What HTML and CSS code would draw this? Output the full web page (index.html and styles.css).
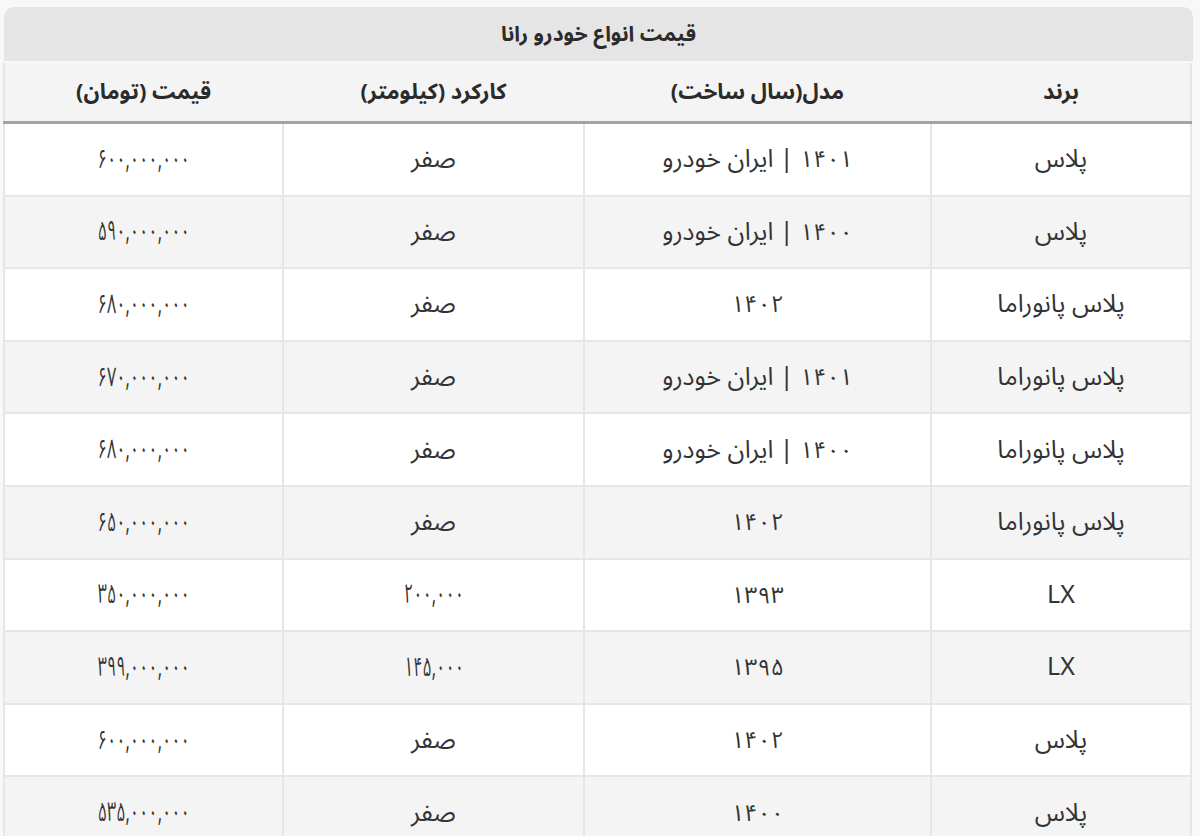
FILE: index.html
```html
<!DOCTYPE html>
<html lang="fa" dir="rtl">
<head>
<meta charset="utf-8">
<title>قیمت انواع خودرو رانا</title>
<link rel="stylesheet" href="styles.css">
</head>
<body>
<div class="wrap">
  <div class="caption">قیمت انواع خودرو رانا</div>
  <table class="price-table">
    <colgroup>
      <col class="c-brand">
      <col class="c-model">
      <col class="c-km">
      <col class="c-price">
    </colgroup>
    <thead>
      <tr><th>برند</th><th>مدل(سال ساخت)</th><th>کارکرد (کیلومتر)</th><th>قیمت (تومان)</th></tr>
    </thead>
    <tbody>
      <tr><td>پلاس</td><td><span class="year">۱۴۰۱</span> | ایران خودرو</td><td>صفر</td><td><span class="num">۶۰۰,۰۰۰,۰۰۰</span></td></tr>
      <tr><td>پلاس</td><td><span class="year">۱۴۰۰</span> | ایران خودرو</td><td>صفر</td><td><span class="num">۵۹۰,۰۰۰,۰۰۰</span></td></tr>
      <tr><td>پلاس پانوراما</td><td><span class="year">۱۴۰۲</span></td><td>صفر</td><td><span class="num">۶۸۰,۰۰۰,۰۰۰</span></td></tr>
      <tr><td>پلاس پانوراما</td><td><span class="year">۱۴۰۱</span> | ایران خودرو</td><td>صفر</td><td><span class="num">۶۷۰,۰۰۰,۰۰۰</span></td></tr>
      <tr><td>پلاس پانوراما</td><td><span class="year">۱۴۰۰</span> | ایران خودرو</td><td>صفر</td><td><span class="num">۶۸۰,۰۰۰,۰۰۰</span></td></tr>
      <tr><td>پلاس پانوراما</td><td><span class="year">۱۴۰۲</span></td><td>صفر</td><td><span class="num">۶۵۰,۰۰۰,۰۰۰</span></td></tr>
      <tr><td>LX</td><td><span class="year">۱۳۹۳</span></td><td><span class="num">۲۰۰,۰۰۰</span></td><td><span class="num">۳۵۰,۰۰۰,۰۰۰</span></td></tr>
      <tr><td>LX</td><td><span class="year">۱۳۹۵</span></td><td><span class="num">۱۴۵,۰۰۰</span></td><td><span class="num">۳۹۹,۰۰۰,۰۰۰</span></td></tr>
      <tr><td>پلاس</td><td><span class="year">۱۴۰۲</span></td><td>صفر</td><td><span class="num">۶۰۰,۰۰۰,۰۰۰</span></td></tr>
      <tr><td>پلاس</td><td><span class="year">۱۴۰۰</span></td><td>صفر</td><td><span class="num">۵۳۵,۰۰۰,۰۰۰</span></td></tr>
    </tbody>
  </table>
</div>
</body>
</html>
```
FILE: styles.css
```css
html, body {
  margin: 0;
  padding: 0;
  background: #f8f8f8;
}
body {
  font-family: "Noto Sans Arabic", "DejaVu Sans", sans-serif;
  color: #333;
}
.wrap {
  display: flex;
  flex-direction: column;
  gap: 2px;
  padding: 7px 7px 0 4px;
}
.caption {
  height: 54px;
  display: flex;
  align-items: center;
  justify-content: center;
  background: #e5e5e5;
  border-radius: 10px 10px 0 0;
  font-weight: bold;
  font-size: 21px;
  color: #2b2b2b;
}
.price-table {
  margin: 0 1px;
  width: 1187px;
  border-collapse: collapse;
  table-layout: fixed;
  font-size: 25px;
}
.c-brand { width: 260px; }
.c-model { width: 347px; }
.c-km { width: 301px; }
.c-price { width: 279px; }
.price-table th {
  height: 58px;
  background: #f4f4f4;
  font-weight: bold;
  font-size: 22px;
  color: #2b2b2b;
  border-bottom: 3px solid #a3a3a3;
  border-left: 2px solid #f4f4f4;
  padding: 0;
}
.price-table th:last-child { border-left: 2px solid #e6e6e6; }
.price-table th:first-child { border-right: 2px solid #e6e6e6; }
.price-table td {
  height: 70.6px;
  padding: 0;
  text-align: center;
  border: 2px solid #e6e6e6;
}
.price-table tbody tr:nth-child(odd) td { background: #fff; }
.price-table tbody tr:nth-child(even) td { background: #f4f4f4; }
.num {
  display: inline-block;
  font-size: 27px;
  transform: scaleX(0.6);
}
.year {
  font-size: 23px;
}
```
